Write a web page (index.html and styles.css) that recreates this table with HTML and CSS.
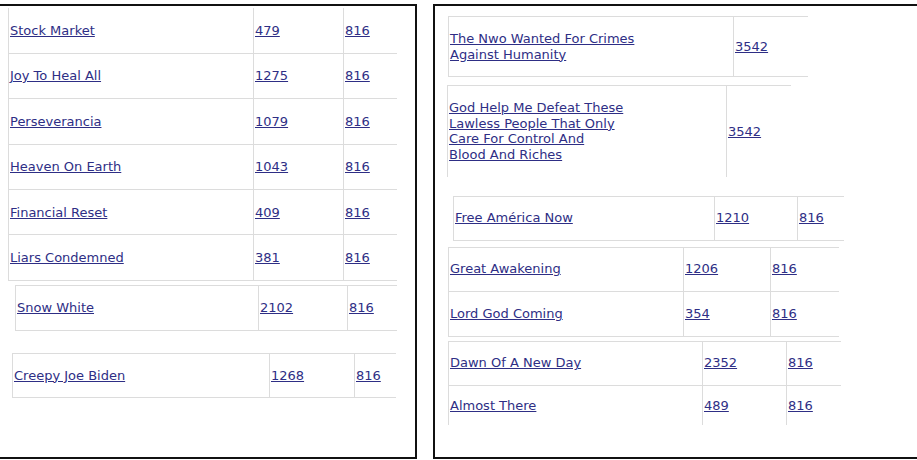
FILE: index.html
```html
<!DOCTYPE html>
<html lang="en">

<head>
  <meta charset="UTF-8">
  <meta name="viewport" content="width=device-width, initial-scale=1.0">
  <title>Songs</title>
  <link rel="stylesheet" href="styles.css">
</head>

<body>
  <div class="panel panel-left">
    <table class="grid list-main">
      <tr><td class="c1"><a href="#">Stock Market</a></td><td class="c2"><a href="#">479</a></td><td class="c3"><a href="#">816</a></td></tr>
      <tr><td class="c1"><a href="#">Joy To Heal All</a></td><td class="c2"><a href="#">1275</a></td><td class="c3"><a href="#">816</a></td></tr>
      <tr><td class="c1"><a href="#">Perseverancia</a></td><td class="c2"><a href="#">1079</a></td><td class="c3"><a href="#">816</a></td></tr>
      <tr><td class="c1"><a href="#">Heaven On Earth</a></td><td class="c2"><a href="#">1043</a></td><td class="c3"><a href="#">816</a></td></tr>
      <tr><td class="c1"><a href="#">Financial Reset</a></td><td class="c2"><a href="#">409</a></td><td class="c3"><a href="#">816</a></td></tr>
      <tr><td class="c1"><a href="#">Liars Condemned</a></td><td class="c2"><a href="#">381</a></td><td class="c3"><a href="#">816</a></td></tr>
    </table>

    <table class="grid boxed list-snow">
      <tr><td class="c1"><a href="#">Snow White</a></td><td class="c2"><a href="#">2102</a></td><td class="c3"><a href="#">816</a></td></tr>
    </table>

    <table class="grid boxed list-creepy">
      <tr><td class="c1"><a href="#">Creepy Joe Biden</a></td><td class="c2"><a href="#">1268</a></td><td class="c3"><a href="#">816</a></td></tr>
    </table>
  </div>

  <div class="panel panel-right">
    <table class="grid boxed list-nwo">
      <tr><td class="c1"><a href="#">The Nwo Wanted For Crimes<br>Against Humanity</a></td><td class="c2"><a href="#">3542</a></td></tr>
    </table>

    <table class="grid boxed open list-god">
      <tr><td class="c1"><a href="#">God Help Me Defeat These<br>Lawless People That Only<br>Care For Control And<br>Blood And Riches</a></td><td class="c2"><a href="#">3542</a></td></tr>
    </table>

    <table class="grid boxed list-free">
      <tr><td class="c1"><a href="#">Free América Now</a></td><td class="c2"><a href="#">1210</a></td><td class="c3"><a href="#">816</a></td></tr>
    </table>

    <table class="grid boxed list-great">
      <tr><td class="c1"><a href="#">Great Awakening</a></td><td class="c2"><a href="#">1206</a></td><td class="c3"><a href="#">816</a></td></tr>
      <tr><td class="c1"><a href="#">Lord God Coming</a></td><td class="c2"><a href="#">354</a></td><td class="c3"><a href="#">816</a></td></tr>
    </table>

    <table class="grid boxed open list-dawn">
      <tr><td class="c1"><a href="#">Dawn Of A New Day</a></td><td class="c2"><a href="#">2352</a></td><td class="c3"><a href="#">816</a></td></tr>
      <tr><td class="c1"><a href="#">Almost There</a></td><td class="c2"><a href="#">489</a></td><td class="c3"><a href="#">816</a></td></tr>
    </table>
  </div>
</body>

</html>
```

FILE: styles.css
```css
/* Global Styles */
body {
  margin: 0;
  padding: 4px 0 0 0;
  display: flex;
  gap: 16px;
  overflow: hidden;
  background: #fff;
  font-family: 'DejaVu Sans', Verdana, sans-serif;
  font-size: 13px;
  line-height: 15.5px;
}

a {
  color: #2e2e85;
}

/* Panels */
.panel {
  box-sizing: border-box;
  height: 455px;
  border: 2px solid #111;
  flex-shrink: 0;
}

.panel-left {
  width: 419px;
  margin-left: -2px;
}

.panel-right {
  width: 500px;
}

/* Tables */
.grid {
  border-collapse: collapse;
  table-layout: fixed;
}

.grid td {
  box-sizing: border-box;
  height: 45.4px;
  padding: 0 1px;
  border-left: 1px solid #dcdcdc;
  border-bottom: 1px solid #dcdcdc;
  vertical-align: middle;
  text-align: left;
  white-space: nowrap;
}

.grid.boxed tr:first-child td {
  border-top: 1px solid #dcdcdc;
}

.grid.open tr:last-child td {
  border-bottom: none;
}

/* Left panel */
.list-main {
  width: 388px;
  margin: 2px 0 0 8px;
}

.list-main .c1 { width: 245px; }
.list-main .c2 { width: 90px; }
.list-main .c3 { width: 53px; }

.list-snow {
  width: 381px;
  margin: 4px 0 0 15px;
}

.list-snow td { height: 45px; }
.list-snow .c1 { width: 243px; }
.list-snow .c2 { width: 89px; }
.list-snow .c3 { width: 49px; }

.list-creepy {
  width: 383px;
  margin: 22px 0 0 12px;
}

.list-creepy td { height: 44px; }
.list-creepy .c1 { width: 257px; }
.list-creepy .c2 { width: 85px; }
.list-creepy .c3 { width: 41px; }

/* Right panel */
.list-nwo {
  width: 359px;
  margin: 10px 0 0 13px;
}

.list-nwo td { height: 60px; }
.list-nwo .c1 { width: 285px; }
.list-nwo .c2 { width: 74px; }

.list-god {
  width: 343px;
  margin: 8px 0 0 12px;
}

.list-god td { height: 91px; }
.list-god .c1 { width: 279px; }
.list-god .c2 { width: 64px; }

.list-free {
  width: 390px;
  margin: 19px 0 0 18px;
}

.list-free td { height: 44px; }
.list-free .c1 { width: 261px; }
.list-free .c2 { width: 83px; }
.list-free .c3 { width: 46px; }

.list-great {
  width: 390px;
  margin: 6px 0 0 13px;
}

.list-great td { height: 44px; }
.list-great tr:last-child td { height: 45px; }
.list-great .c1 { width: 235px; }
.list-great .c2 { width: 87px; }
.list-great .c3 { width: 68px; }

.list-dawn {
  width: 392px;
  margin: 4px 0 0 13px;
}

.list-dawn td { height: 44px; }
.list-dawn tr:last-child td { height: 40px; }
.list-dawn .c1 { width: 254px; }
.list-dawn .c2 { width: 84px; }
.list-dawn .c3 { width: 54px; }
```
